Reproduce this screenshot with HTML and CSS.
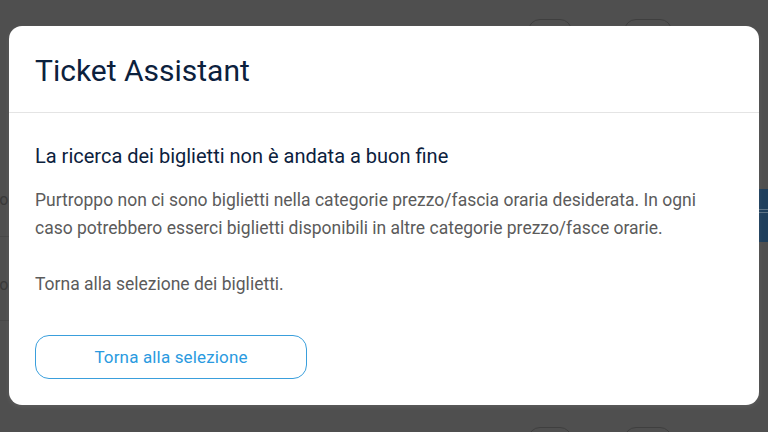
FILE: index.html
```html
<!DOCTYPE html>
<html lang="it">
<head>
<meta charset="utf-8">
<title>Ticket Assistant</title>
<link rel="stylesheet" href="styles.css">
</head>
<body>
<div class="backdrop">
  <span class="bg-pill bg-pill-a"></span>
  <span class="bg-pill bg-pill-b"></span>
  <span class="bg-pill bg-pill-c"></span>
  <span class="bg-pill bg-pill-d"></span>
  <span class="bg-text bg-text-a">ro</span>
  <span class="bg-text bg-text-b">ro</span>
  <span class="bg-line bg-line-a"></span>
  <span class="bg-line bg-line-b"></span>
  <span class="bg-strip"></span>
</div>
<div class="modal" role="dialog" aria-labelledby="modal-title">
  <header class="modal-header">
    <h1 id="modal-title" class="modal-title">Ticket Assistant</h1>
  </header>
  <section class="modal-body">
    <h2 class="modal-subtitle">La ricerca dei biglietti non è andata a buon fine</h2>
    <p class="modal-text">Purtroppo non ci sono biglietti nella categorie prezzo/fascia oraria desiderata. In ogni caso potrebbero esserci biglietti disponibili in altre categorie prezzo/fasce orarie.<br><br>Torna alla selezione dei biglietti.</p>
    <button class="btn-outline" type="button">Torna alla selezione</button>
  </section>
</div>
</body>
</html>
```

FILE: styles.css
```css
html, body {
  margin: 0;
  padding: 0;
  width: 768px;
  height: 432px;
  overflow: hidden;
}
body {
  background: #4f4f4f;
  font-family: Roboto, "Liberation Sans", Arial, sans-serif;
  position: relative;
}
.backdrop {
  position: absolute;
  inset: 0;
  overflow: hidden;
}
.bg-pill {
  position: absolute;
  width: 44px;
  height: 30px;
  border: 1px solid #3f3f3f;
  border-radius: 12px;
  box-sizing: border-box;
}
.bg-pill-a { left: 528px; top: 19px; }
.bg-pill-b { left: 624px; top: 19px; width: 48px; }
.bg-pill-c { left: 528px; top: 427px; }
.bg-pill-d { left: 624px; top: 427px; width: 48px; }
.bg-text {
  position: absolute;
  left: -6px;
  font-size: 16px;
  color: #393939;
}
.bg-text-a { top: 190px; }
.bg-text-b { top: 275px; }
.bg-line {
  position: absolute;
  left: 0;
  width: 10px;
  height: 1px;
  background: #474747;
}
.bg-line-a { top: 236px; }
.bg-line-b { top: 320px; }
.bg-strip {
  position: absolute;
  left: 759px;
  top: 189px;
  width: 9px;
  height: 53px;
  background: linear-gradient(#1f3f5c 0, #1f3f5c 20px, #5d7385 20px, #5d7385 21px, #1f3f5c 21px, #1f3f5c 23px, #5d7385 23px, #5d7385 24px, #1f3f5c 24px);
}
.modal {
  position: absolute;
  left: 9px;
  top: 26px;
  width: 750px;
  height: 379px;
  background: #ffffff;
  border-radius: 13px;
  box-shadow: 0 2px 5px rgba(255, 255, 255, 0.08);
  display: flex;
  flex-direction: column;
  overflow: hidden;
}
.modal-header {
  padding: 27px 26px 23px;
  border-bottom: 1px solid #e4e4e4;
}
.modal-title {
  margin: 0;
  font-size: 30px;
  line-height: 36px;
  font-weight: 400;
  color: #0c213d;
}
.modal-body {
  padding: 30px 26px 26px;
  display: flex;
  flex-direction: column;
  align-items: flex-start;
}
.modal-subtitle {
  margin: 0 0 17px;
  font-size: 20px;
  line-height: 26px;
  font-weight: 400;
  color: #0c213d;
}
.modal-text {
  margin: 0 0 37px;
  font-size: 17.5px;
  line-height: 28px;
  color: #5b5b5b;
}
.btn-outline {
  width: 272px;
  height: 44px;
  flex: none;
  border: 1px solid #3a9fdc;
  border-radius: 14px;
  background: #ffffff;
  color: #2a9ae0;
  font-family: Roboto, "Liberation Sans", Arial, sans-serif;
  font-size: 17px;
  letter-spacing: 0.15px;
  padding: 0;
  display: flex;
  align-items: center;
  justify-content: center;
}
```
